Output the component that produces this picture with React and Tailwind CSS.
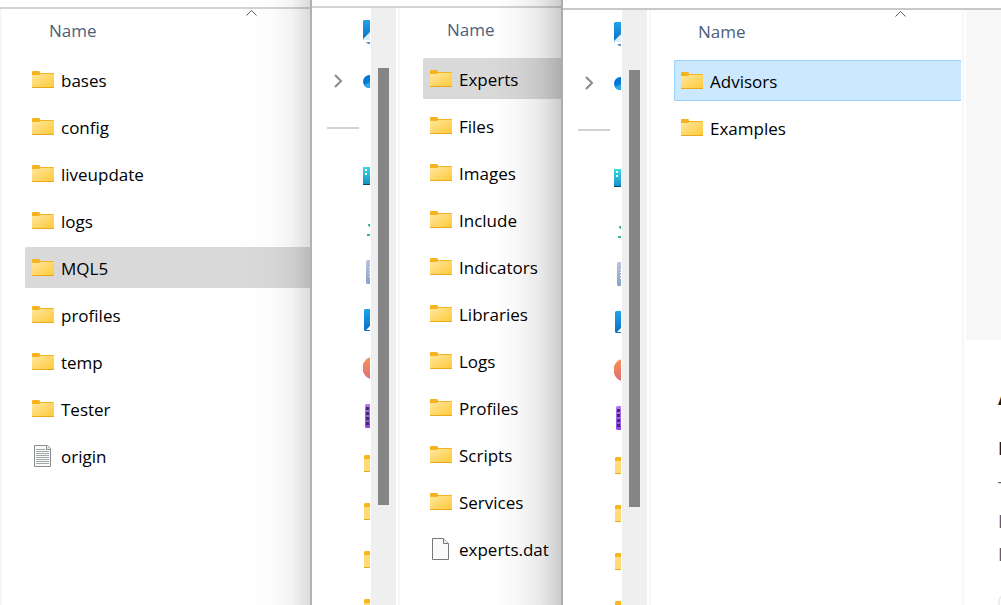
import React from "react";

const mainFolders = [
    { name: "bases" },
    { name: "config" },
    { name: "liveupdate" },
    { name: "logs" },
    { name: "MQL5", active: true },
    { name: "profiles" },
    { name: "temp" },
    { name: "Tester" },
    { name: "origin", type: "text" },
];

const mqlFolders = [
    { name: "Experts", active: true },
    { name: "Files" },
    { name: "Images" },
    { name: "Include" },
    { name: "Indicators" },
    { name: "Libraries" },
    { name: "Logs" },
    { name: "Profiles" },
    { name: "Scripts" },
    { name: "Services" },
    { name: "experts.dat", type: "file" },
];

const expertFolders = [
    { name: "Advisors", selected: true },
    { name: "Examples" },
];

const navItems = [
    "gallery",
    "cloud",
    "divider",
    "desktop",
    "downloads",
    "documents",
    "pictures",
    "music",
    "videos",
    "folder",
    "folder",
    "folder",
    "folder",
];

// shared gradients, referenced by id from every icon
const Gradients = () => (
    <svg width="0" height="0" className="absolute" aria-hidden="true">
        <defs>
            <linearGradient id="folder" x1="0" y1="0" x2="1" y2="1">
                <stop offset="0" stopColor="#ffe79f" />
                <stop offset="1" stopColor="#ffc937" />
            </linearGradient>
            <linearGradient id="blue" x1="0" y1="0" x2="0" y2="1">
                <stop offset="0" stopColor="#1fa5e8" />
                <stop offset="1" stopColor="#0b6cc4" />
            </linearGradient>
            <linearGradient id="teal" x1="0" y1="0" x2="0" y2="1">
                <stop offset="0" stopColor="#35dbe6" />
                <stop offset="1" stopColor="#1b8ac4" />
            </linearGradient>
            <linearGradient id="slate" x1="0" y1="0" x2="0" y2="1">
                <stop offset="0" stopColor="#b6c6dc" />
                <stop offset="1" stopColor="#8aa3c4" />
            </linearGradient>
            <linearGradient id="orange" x1="0" y1="0" x2="0" y2="1">
                <stop offset="0" stopColor="#f79452" />
                <stop offset="1" stopColor="#d9707a" />
            </linearGradient>
            <linearGradient id="purple" x1="0" y1="0" x2="0" y2="1">
                <stop offset="0" stopColor="#b57bf3" />
                <stop offset="1" stopColor="#8f46e6" />
            </linearGradient>
        </defs>
    </svg>
);

const FileIcon = ({ type }) => {
    if (type === "text") {
        return (
            <svg width="22" height="23" viewBox="0 0 22 23" aria-hidden="true">
                <path d="M2.5 1.5h13l3 3v18h-16z" fill="#fafafa" stroke="#8b8f8f" />
                <path d="M14.5 1.5v4h4" fill="#e8e8e8" stroke="#8b8f8f" />
                <path
                    d="M4 5.5h9M4 7.5h13M4 9.5h13M4 11.5h13M4 13.5h13M4 15.5h13M4 17.5h13M4 19.5h13"
                    stroke="#a3a7a7"
                />
            </svg>
        );
    }
    if (type === "file") {
        return (
            <svg width="22" height="23" viewBox="0 0 22 23" aria-hidden="true">
                <path d="M2.5 1.5h11l5 5v16h-16z" fill="#fafafa" stroke="#787878" />
                <path d="M13.5 1.5v5h5" fill="#ededed" stroke="#787878" />
            </svg>
        );
    }
    return (
        <svg width="22" height="23" viewBox="0 0 22 23" aria-hidden="true">
            <path d="M0 4a1 1 0 0 1 1-1h6l1 1v1h13a1 1 0 0 1 1 1v3H0z" fill="#f5b31f" />
            <path d="M0 7h7l1-1h14v14H0z" fill="url(#folder)" />
            <path d="M0 19h22v.5l-.5.5H.5l-.5-.5z" fill="#eaa81c" />
        </svg>
    );
};

const NavIcon = ({ type }) => (
    <svg width="7" height="48" viewBox="0 0 7 48" aria-hidden="true">
        {type === "gallery" && (
            <>
                <path d="M0 13l1-1h6v20H1l-1-1z" fill="url(#blue)" />
                <path d="M0 31l7-7v8H1z" fill="#d9edfb" />
                <path d="M3 34h4v2H5z" fill="#5b8fc9" />
            </>
        )}
        {type === "cloud" && (
            <>
                <circle cx="6.5" cy="25.5" r="6.5" fill="#0378d6" />
                <path d="M1 29l6-3v6H5q-3-.5-4-3z" fill="#28a8ea" />
            </>
        )}
        {type === "desktop" && (
            <>
                <path d="M0 15h7v18H1l-1-1z" fill="url(#teal)" />
                <path d="M2 17h2v2H2zM2 21h2v2H2z" fill="#fff" />
                <path d="M0 32h7v1H0z" fill="#0b4a69" />
            </>
        )}
        {type === "downloads" && (
            <path d="M5 24h2v3H6v-1H5zM4 34h3v2H4z" fill="#2ebd8b" />
        )}
        {type === "documents" && (
            <>
                <path d="M3 13l1-1h3v24H4l-1-1z" fill="url(#slate)" />
                <path d="M6 19h1v1H6zM6 22h1v1H6zM6 25h1v1H6zM6 28h1v1H6z" fill="#fff" />
            </>
        )}
        {type === "pictures" && (
            <>
                <path d="M1 14l1-1h5v22H2l-1-1z" fill="url(#blue)" />
                <path d="M3 34l4-4v4z" fill="#fff" />
            </>
        )}
        {type === "music" && <circle cx="11" cy="24" r="11.5" fill="url(#orange)" />}
        {type === "videos" && (
            <>
                <path d="M2 13l1-1h4v24H3l-1-1z" fill="url(#purple)" />
                <path d="M3 15h3v3H3zM3 20h3v3H3zM3 25h3v3H3zM3 30h3v3H3z" fill="#432a66" />
            </>
        )}
        {type === "folder" && (
            <>
                <path d="M1 16l1-1h5v5H1z" fill="#f9b71c" />
                <path d="M1 19h6v13H1z" fill="#ffdb7a" />
                <path d="M1 31h6v1H1z" fill="#eaa81c" />
            </>
        )}
    </svg>
);

const NavPane = () => (
    <nav className="flex shrink-0" aria-label="Quick access">
        <ul className="w-[59px] pr-px">
            {navItems.map((type, index) => (
                <li key={index} className="flex h-12 items-center justify-end">
                    {type === "cloud" && (
                        <button className="mr-5 text-[#8a8a8a]" aria-label="Expand">
                            <svg width="9" height="15" viewBox="0 0 9 15" fill="none">
                                <path d="M1 2l6 6-6 6" stroke="currentColor" strokeWidth="2" />
                            </svg>
                        </button>
                    )}
                    {type === "divider" ? (
                        <hr className="mr-[11px] w-8 border-t-2 border-[#d3d3d3]" />
                    ) : (
                        <NavIcon type={type} />
                    )}
                </li>
            ))}
        </ul>
        <div className="mr-0.5 w-[25px] bg-[#efefef] pt-[60px]">
            <div className="ml-[7px] h-[437px] w-[11px] bg-[#858585]" />
        </div>
    </nav>
);

const rowStyle = (item) => {
    if (item.selected) return "border-[#99d1ff] bg-[#cce8ff]";
    if (item.active) return "border-[#d9d9d9] bg-[#d9d9d9]";
    return "border-transparent";
};

const FileList = ({ items }) => (
    <div className="min-w-0 flex-1 overflow-hidden border-l-2 border-[#f6f6f6] pl-[23px]">
        <div className="flex h-[50px] w-[453px] flex-col items-center">
            <svg width="11" height="6" viewBox="0 0 11 6" fill="none" className="mt-px shrink-0">
                <path d="M.5 5.5l5-5 5 5" stroke="#5a5a5a" />
            </svg>
            <button className="self-start pl-6 text-[17px] leading-[29px] text-[#4c607a]">
                Name
            </button>
        </div>
        <ul className="flex flex-col gap-1.5">
            {items.map((item) => (
                <li
                    key={item.name}
                    className={`flex h-[41px] items-center gap-[7px] rounded-l-xs border border-r-0 pl-1.5 text-[17px] leading-6 text-black ${rowStyle(item)}`}
                >
                    <FileIcon type={item.type} />
                    <span className="pt-[3px] whitespace-nowrap">{item.name}</span>
                </li>
            ))}
        </ul>
    </div>
);

const DetailsPane = () => (
    <aside className="ml-px w-[39px] shrink-0 overflow-hidden border-l-2 border-[#f7f7f7] pl-0.5">
        <div className="h-[330px] bg-[#f8f8f8]" />
        <div className="pl-8 text-[18px] text-[#5c5c5c]">
            <h2 className="pt-11 text-[20px] leading-7 font-bold text-[#1a1a1a]">A</h2>
            <h3 className="pt-6 leading-6 font-semibold text-[#1a1a1a]">D</h3>
            <dl className="pt-3 leading-[33px]">
                <dt>T</dt>
                <dt>L</dt>
                <dt>D</dt>
            </dl>
            <button
                className="mt-6 h-10 w-40 rounded-md border-2 border-[#ececec]"
                aria-label="Properties"
            />
        </div>
    </aside>
);

// dims the right side of a window that lies behind the next one
const Shade = ({ className }) => (
    <div
        className={`pointer-events-none absolute inset-y-0 right-0 w-[70px] ${className}`}
    />
);

const App = () => {
    return (
        <main className="grid h-screen grid-cols-[310fr_251fr_440fr] overflow-hidden bg-white font-['Open_Sans','Noto_Sans',sans-serif]">
            <Gradients />
            <section className="relative flex min-w-0 flex-col overflow-hidden pt-[7px]">
                <div className="flex flex-1 border-t-2 border-[#d3d3d3]">
                    <FileList items={mainFolders} />
                </div>
                <Shade className="bg-[linear-gradient(to_right,transparent,rgba(0,0,0,0.01)_45%,rgba(0,0,0,0.05)_75%,rgba(0,0,0,0.14))]" />
            </section>
            <section className="relative flex min-w-0 flex-col overflow-hidden border-l-2 border-[#b2b2b2] pt-1.5">
                <div className="flex flex-1 border-t-2 border-[#d3d3d3]">
                    <NavPane />
                    <FileList items={mqlFolders} />
                </div>
                <Shade className="bg-[linear-gradient(to_right,transparent,rgba(0,0,0,0.03)_40%,rgba(0,0,0,0.09)_72%,rgba(0,0,0,0.2))]" />
            </section>
            <section className="flex min-w-0 flex-col overflow-hidden border-l-2 border-[#acacac] pt-2">
                <div className="flex flex-1 border-t-2 border-[#c8c8c8]">
                    <NavPane />
                    <FileList items={expertFolders} />
                    <DetailsPane />
                </div>
            </section>
        </main>
    );
};

export default App;
